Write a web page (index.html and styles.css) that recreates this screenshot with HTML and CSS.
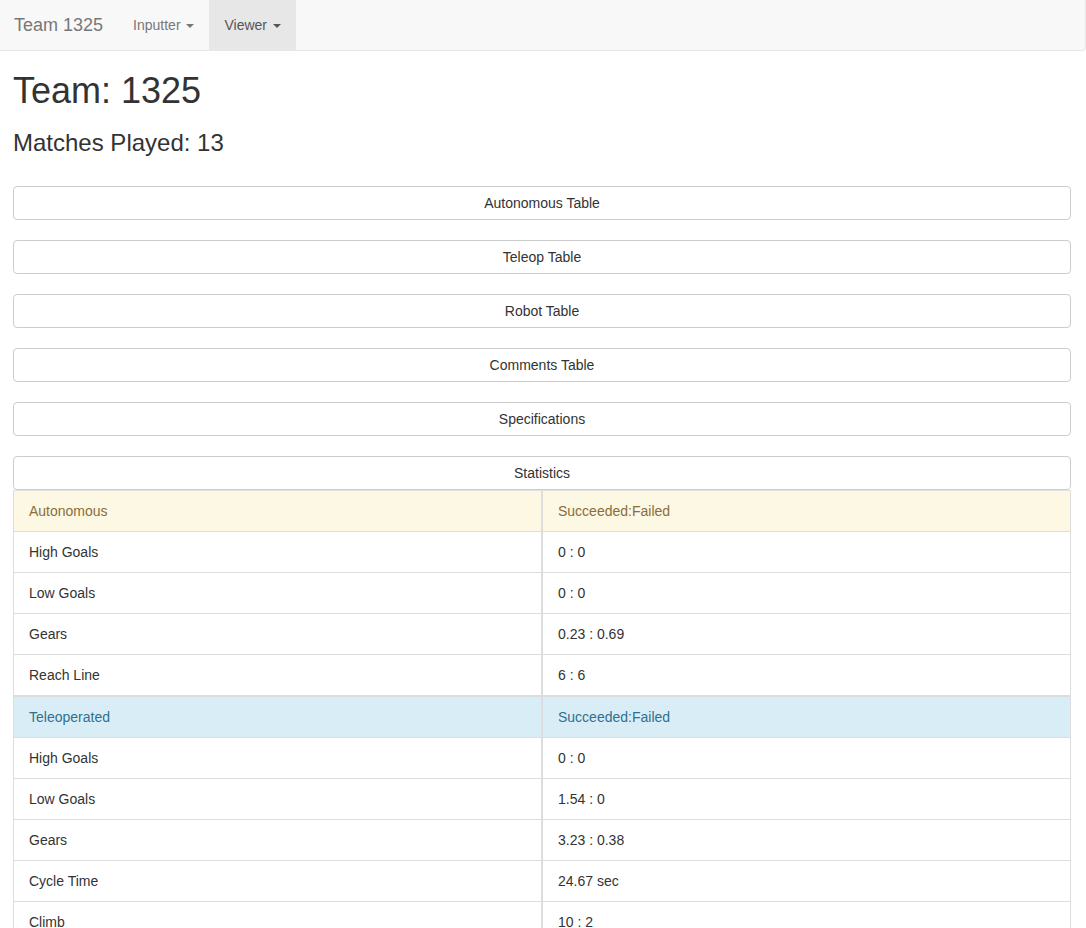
FILE: index.html
```html
<!DOCTYPE html>
<html>
<head>
<meta charset="utf-8">
<title>Team 1325</title>
<link rel="stylesheet" href="styles.css">
</head>
<body>
<nav class="navbar">
  <a class="brand">Team 1325</a>
  <ul class="nav">
    <li class="nav-item">Inputter <span class="caret"></span></li>
    <li class="nav-item active">Viewer <span class="caret"></span></li>
  </ul>
</nav>
<main class="content">
  <h1 class="title">Team: 1325</h1>
  <h3 class="subtitle">Matches Played: 13</h3>
  <div class="buttons">
    <button class="btn">Autonomous Table</button>
    <button class="btn">Teleop Table</button>
    <button class="btn">Robot Table</button>
    <button class="btn">Comments Table</button>
    <button class="btn">Specifications</button>
    <button class="btn last">Statistics</button>
  </div>
  <table class="stats">
    <tbody>
      <tr class="row-warning"><td>Autonomous</td><td>Succeeded:Failed</td></tr>
      <tr><td>High Goals</td><td>0 : 0</td></tr>
      <tr><td>Low Goals</td><td>0 : 0</td></tr>
      <tr><td>Gears</td><td>0.23 : 0.69</td></tr>
      <tr><td>Reach Line</td><td>6 : 6</td></tr>
      <tr class="row-info"><td>Teleoperated</td><td>Succeeded:Failed</td></tr>
      <tr><td>High Goals</td><td>0 : 0</td></tr>
      <tr><td>Low Goals</td><td>1.54 : 0</td></tr>
      <tr><td>Gears</td><td>3.23 : 0.38</td></tr>
      <tr><td>Cycle Time</td><td>24.67 sec</td></tr>
      <tr><td>Climb</td><td>10 : 2</td></tr>
    </tbody>
  </table>
</main>
</body>
</html>
```
FILE: styles.css
```css
html, body {
  margin: 0;
  padding: 0;
  background: #fff;
  font-family: "Liberation Sans", Arial, Helvetica, sans-serif;
  font-size: 14px;
  line-height: 20px;
  color: #333;
}

.navbar {
  display: flex;
  align-items: stretch;
  height: 50px;
  background: #f8f8f8;
  border-bottom: 1px solid #e7e7e7;
  border-right: 1px solid #e7e7e7;
  border-bottom-right-radius: 4px;
  box-sizing: content-box;
  width: 1085px;
}

.brand {
  display: block;
  padding: 15px 15px 15px 14px;
  font-size: 18px;
  line-height: 20px;
  color: #777;
}

.nav {
  display: flex;
  list-style: none;
  margin: 0;
  padding: 0;
}

.nav-item {
  padding: 15px;
  line-height: 20px;
  color: #777;
}

.nav-item.active {
  background: #e7e7e7;
  color: #555;
}

.caret {
  display: inline-block;
  width: 0;
  height: 0;
  margin-left: 2px;
  vertical-align: middle;
  border-top: 4px solid;
  border-left: 4px solid transparent;
  border-right: 4px solid transparent;
}

.content {
  padding: 0 15px 0 13px;
}

.title {
  margin: 20px 0 10px;
  font-size: 36px;
  font-weight: 500;
  line-height: 39.6px;
}

.subtitle {
  margin: 19px 0 30px;
  font-size: 24px;
  font-weight: 500;
  line-height: 26.4px;
}

.buttons {
  display: flex;
  flex-direction: column;
  gap: 20px;
}

.btn {
  display: block;
  width: 100%;
  height: 34px;
  padding: 6px 12px;
  background: #fff;
  border: 1px solid #ccc;
  border-radius: 4px;
  font-family: inherit;
  font-size: 14px;
  line-height: 20px;
  color: #333;
  text-align: center;
}

.stats {
  width: 100%;
  border-collapse: separate;
  border-spacing: 0;
  table-layout: fixed;
  border-top: 1px solid #e3e3e3;
  border-left: 1px solid #ddd;
  border-right: 1px solid #ddd;
}

.stats td {
  padding: 10px 15px;
  line-height: 20px;
  border-bottom: 1px solid #ddd;
  vertical-align: top;
}

.stats td:first-child {
  border-right: 1px solid #ddd;
}

.stats td:last-child {
  border-left: 1px solid #ddd;
}

.row-warning td {
  background: #fcf8e3;
  color: #8a6d3b;
}

.row-info td {
  background: #d9edf7;
  color: #31708f;
  border-top: 1px solid #ddd;
}
```
